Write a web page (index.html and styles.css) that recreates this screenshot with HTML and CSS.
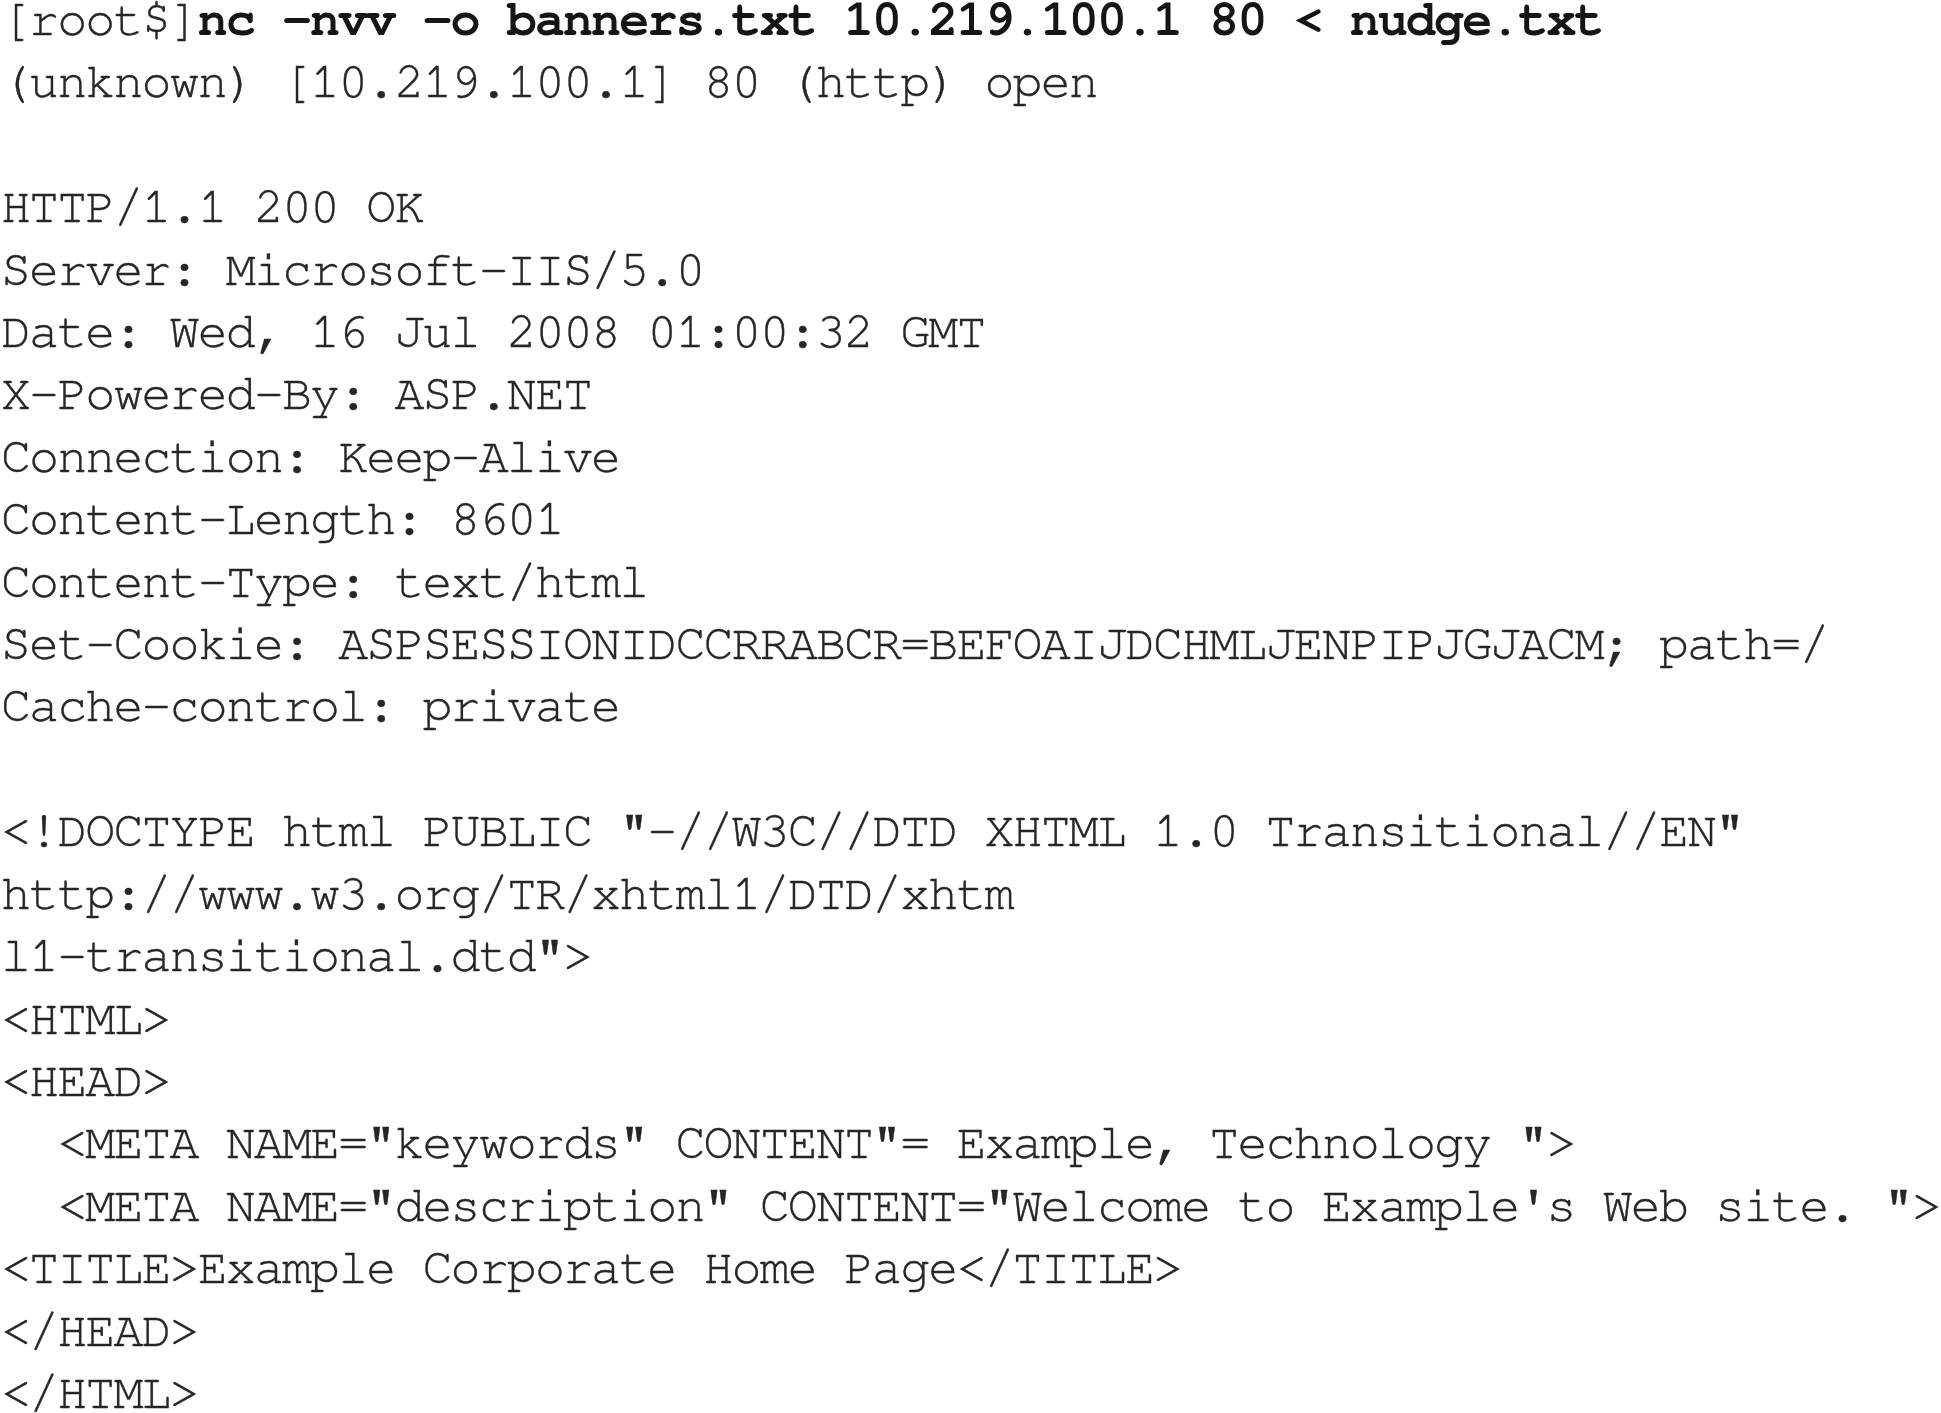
FILE: index.html
```html
<!DOCTYPE html>
<html>
<head>
<meta charset="utf-8">
<link rel="stylesheet" href="styles.css">
</head>
<body>
<pre class="term"><span class="prompt">[root$]</span><b class="cmd">nc -nvv -o banners.txt 10.219.100.1 80 &lt; nudge.txt</b>
(unknown) [10.219.100.1] 80 (http) open

HTTP/1.1 200 OK
Server: Microsoft-IIS/5.0
Date: Wed, 16 Jul 2008 01:00:32 GMT
X-Powered-By: ASP.NET
Connection: Keep-Alive
Content-Length: 8601
Content-Type: text/html
Set-Cookie: ASPSESSIONIDCCRRABCR=BEFOAIJDCHMLJENPIPJGJACM; path=/
Cache-control: private

&lt;!DOCTYPE html PUBLIC "-//W3C//DTD XHTML 1.0 Transitional//EN"
http://www.w3.org/TR/xhtml1/DTD/xhtm
l1-transitional.dtd"&gt;
&lt;HTML&gt;
&lt;HEAD&gt;
  &lt;META NAME="keywords" CONTENT"= Example, Technology "&gt;
  &lt;META NAME="description" CONTENT="Welcome to Example's Web site. "&gt;
&lt;TITLE&gt;Example Corporate Home Page&lt;/TITLE&gt;
&lt;/HEAD&gt;
&lt;/HTML&gt;</pre>
</body>
</html>
```

FILE: styles.css
```css
html, body {
  margin: 0;
  padding: 0;
  background: #ffffff;
}
.term {
  margin: -11px 0 0 0;
  padding: 0 0 0 1px;
  font-family: "Nimbus Mono PS", "Nimbus Mono L", "FreeMono", "Courier New", "Liberation Mono", monospace;
  font-size: 50px;
  letter-spacing: -1.9px;
  line-height: 62.4px;
  color: #262626;
  -webkit-text-stroke: 0.4px #262626;
  white-space: pre;
}
.cmd {
  font-weight: bold;
  color: #151515;
  -webkit-text-stroke: 0;
}
```
